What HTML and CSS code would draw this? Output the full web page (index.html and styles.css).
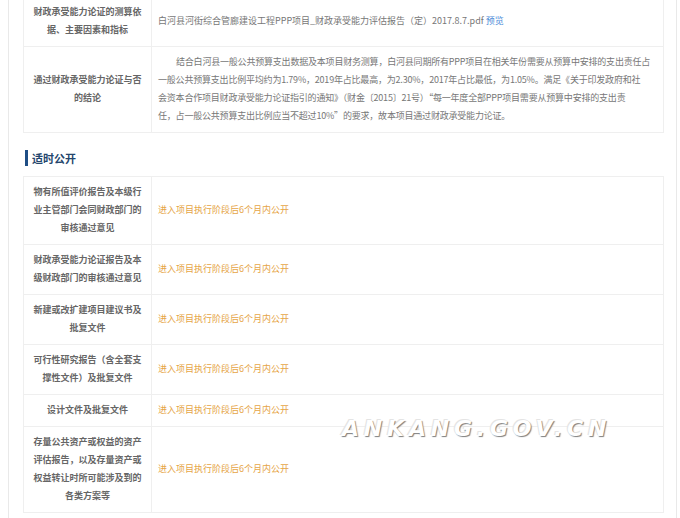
FILE: index.html
```html
<!DOCTYPE html>
<html lang="zh-CN">
<head>
    <meta charset="UTF-8">
    <meta name="viewport" content="width=device-width, initial-scale=1.0">
    <title>项目信息公开</title>
    <link rel="stylesheet" href="styles.css">
</head>
<body>
    <div class="page">
        <table class="info-table">
            <tr>
                <th>财政承受能力论证的测算依据、主要因素和指标</th>
                <td>白河县河街综合管廊建设工程PPP项目_财政承受能力评估报告（定）2017.8.7.pdf <a href="#" class="preview">预览</a></td>
            </tr>
            <tr>
                <th>通过财政承受能力论证与否的结论</th>
                <td><p class="para">结合白河县一般公共预算支出数据及本项目财务测算，白河县同期所有PPP项目在相关年份需要从预算中安排的支出责任占<br>一般公共预算支出比例平均约为1.79%，2019年占比最高，为2.30%，2017年占比最低，为1.05%。满足《关于印发政府和社<br>会资本合作项目财政承受能力论证指引的通知》（财金〔2015〕21号）“每一年度全部PPP项目需要从预算中安排的支出责<br>任，占一般公共预算支出比例应当不超过10%”的要求，故本项目通过财政承受能力论证。</p></td>
            </tr>
        </table>

        <h3 class="section-title">适时公开</h3>

        <table class="info-table">
            <tr>
                <th>物有所值评价报告及本级行业主管部门会同财政部门的审核通过意见</th>
                <td class="pending">进入项目执行阶段后6个月内公开</td>
            </tr>
            <tr>
                <th>财政承受能力论证报告及本级财政部门的审核通过意见</th>
                <td class="pending">进入项目执行阶段后6个月内公开</td>
            </tr>
            <tr>
                <th>新建或改扩建项目建议书及批复文件</th>
                <td class="pending">进入项目执行阶段后6个月内公开</td>
            </tr>
            <tr>
                <th>可行性研究报告（含全套支撑性文件）及批复文件</th>
                <td class="pending">进入项目执行阶段后6个月内公开</td>
            </tr>
            <tr>
                <th>设计文件及批复文件</th>
                <td class="pending">进入项目执行阶段后6个月内公开</td>
            </tr>
            <tr>
                <th>存量公共资产或权益的资产评估报告，以及存量资产或权益转让时所可能涉及到的各类方案等</th>
                <td class="pending">进入项目执行阶段后6个月内公开</td>
            </tr>
        </table>
    </div>

    <div class="watermark">ANKANG.GOV.CN</div>
</body>
</html>
```

FILE: styles.css
```css
body {
    margin: 0;
    padding: 0;
    background: #fff;
    font-family: "Noto Sans CJK SC", "Noto Sans", sans-serif;
    position: relative;
}
.page {
    width: 641px;
    margin: -4px 0 0 8px;
    padding: 0 12px 20px 14px;
    border-left: 1px solid #e9e9e9;
    border-right: 1px solid #e9e9e9;
}
.info-table {
    width: 641px;
    border-collapse: collapse;
    table-layout: fixed;
    font-size: 9px;
    line-height: 18px;
}
.info-table th,
.info-table td {
    border: 1px solid #efefef;
    padding: 6px 8px 7px;
    vertical-align: middle;
}
.info-table th {
    width: 111px;
    text-align: center;
    font-weight: bold;
    color: #666;
}
.info-table td {
    color: #777;
    padding-left: 6px;
    padding-right: 2px;
}
.para {
    margin: 0;
    text-indent: 2em;
    letter-spacing: -0.2px;
    white-space: nowrap;
}
.preview {
    color: #4a8ad8;
    text-decoration: none;
}
.pending {
    color: #e6a546 !important;
}
.section-title {
    margin: 17px 0 10px 2px;
    padding-left: 4px;
    border-left: 3px solid #1f4e85;
    font-size: 11px;
    line-height: 16px;
    font-weight: bold;
    color: #24466d;
}
.watermark {
    position: absolute;
    left: 342px;
    top: 418px;
    font-family: "DejaVu Sans", sans-serif;
    font-size: 22px;
    font-weight: bold;
    font-style: italic;
    letter-spacing: 4.8px;
    line-height: 1;
    color: #fff;
    text-shadow: 1px 1px 1px #7e7e7e, -1px -1px 0 #e4e4e4;
}
```
